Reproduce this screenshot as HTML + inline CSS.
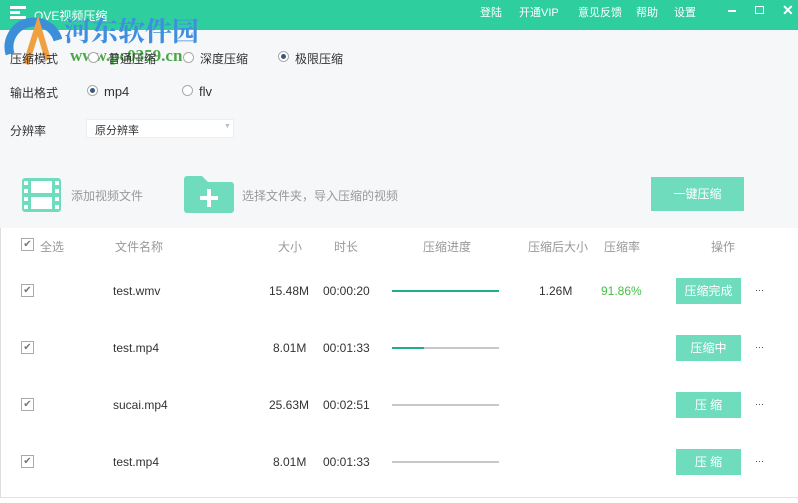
<!DOCTYPE html>
<html><head><meta charset="utf-8"><style>
*{margin:0;padding:0;box-sizing:border-box}
body{width:798px;height:503px;position:relative;overflow:hidden;background:#fff;font-family:"Liberation Sans","Noto Sans CJK SC",sans-serif;font-size:12px;color:#333}
.a{position:absolute;white-space:nowrap}
.tb{left:0;top:0;width:798px;height:30px;background:#2fce9e}
.top{left:0;top:30px;width:798px;height:198px;background:#f6f7f9}
.w{color:#fff;font-size:11px}
.radio{width:11px;height:11px;border:1px solid #aaa;border-radius:50%;background:#fff}
.radio.on::after{content:"";position:absolute;left:2px;top:2px;width:5px;height:5px;border-radius:50%;background:#3a5a7a}
.cb{width:13px;height:13px;border:1px solid #aaa;background:#fff;font-size:10px;line-height:11px;text-align:center;color:#777}
.btn{width:65px;height:26px;background:#6fdcbd;color:#fff;text-align:center;line-height:26px;font-size:12px}
.bar{height:2px;background:#c8c8c8;width:107px;left:392px}
.g{color:#999}
</style></head><body>
<div class="a tb"></div>
<svg class="a" style="left:10px;top:6px" width="16" height="14"><rect x="0" y="0" width="16" height="3" fill="#fff"/><rect x="0" y="5" width="10" height="3" fill="#fff"/><rect x="0" y="10" width="16" height="3" fill="#fff"/></svg>
<div class="a w" style="left:34px;top:7px;font-size:12px">QVE视频压缩</div>
<div class="a w" style="left:480px;top:4px">登陆</div>
<div class="a w" style="left:519px;top:4px">开通VIP</div>
<div class="a w" style="left:578px;top:4px">意见反馈</div>
<div class="a w" style="left:636px;top:4px">帮助</div>
<div class="a w" style="left:674px;top:4px">设置</div>
<div class="a" style="left:728px;top:10px;width:8px;height:2px;background:#fff"></div>
<div class="a" style="left:755px;top:6px;width:9px;height:8px;border:1px solid #fff"></div>
<div class="a w" style="left:782px;top:2px;font-size:14px;font-weight:bold">✕</div>
<div class="a top"></div>
<svg class="a" style="left:2px;top:10px" width="60" height="56"><path d="M8 44 A24 24 0 1 1 56 30" stroke="#3d8ed8" stroke-width="9" fill="none"/><path d="M24 54 L36 16 L46 50" stroke="#f0a040" stroke-width="6" fill="none"/></svg>
<div class="a" style="left:64px;top:10px;font-size:27px;font-weight:bold;color:#3f8fe0;font-family:'Noto Serif CJK SC',serif">河东软件园</div>
<div class="a" style="left:70px;top:46px;font-size:17px;font-weight:bold;color:#4aa84a;font-family:'Liberation Serif',serif">www.pc0359.cn</div>
<div class="a" style="left:10px;top:50px;color:#333">压缩模式</div>
<div class="a radio" style="left:88px;top:52px"></div>
<div class="a" style="left:108px;top:50px">普通压缩</div>
<div class="a radio" style="left:183px;top:52px"></div>
<div class="a" style="left:200px;top:50px">深度压缩</div>
<div class="a radio on" style="left:278px;top:51px"></div>
<div class="a" style="left:295px;top:50px">极限压缩</div>
<div class="a" style="left:10px;top:84px">输出格式</div>
<div class="a radio on" style="left:87px;top:85px"></div>
<div class="a" style="left:104px;top:84px;font-size:13px">mp4</div>
<div class="a radio" style="left:182px;top:85px"></div>
<div class="a" style="left:199px;top:84px;font-size:13px">flv</div>
<div class="a" style="left:10px;top:122px">分辨率</div>
<div class="a" style="left:86px;top:119px;width:148px;height:19px;background:#fff;border:1px solid #eee"></div>
<div class="a" style="left:95px;top:122px;font-size:11px">原分辨率</div>
<div class="a" style="left:224px;top:123px;font-size:7px;color:#bbb">▼</div>
<svg class="a" style="left:22px;top:178px" width="39" height="34"><rect x="0" y="0" width="39" height="34" rx="3" fill="#6fdcbd"/><rect x="9" y="3" width="21" height="12" fill="#fff"/><rect x="9" y="19" width="21" height="12" fill="#fff"/><g fill="#fff"><rect x="2" y="3" width="4" height="4"/><rect x="2" y="11" width="4" height="4"/><rect x="2" y="19" width="4" height="4"/><rect x="2" y="27" width="4" height="4"/><rect x="33" y="3" width="4" height="4"/><rect x="33" y="11" width="4" height="4"/><rect x="33" y="19" width="4" height="4"/><rect x="33" y="27" width="4" height="4"/></g></svg>
<div class="a g" style="left:71px;top:187px">添加视频文件</div>
<svg class="a" style="left:184px;top:176px" width="50" height="37"><path d="M3 0 H18 L24 6 H47 A3 3 0 0 1 50 9 V34 A3 3 0 0 1 47 37 H3 A3 3 0 0 1 0 34 V3 A3 3 0 0 1 3 0Z" fill="#6fdcbd"/><rect x="23" y="13" width="4" height="18" fill="#fff"/><rect x="16" y="20" width="18" height="4" fill="#fff"/></svg>
<div class="a g" style="left:242px;top:187px">选择文件夹，导入压缩的视频</div>
<div class="a btn" style="left:651px;top:177px;width:93px;height:34px;line-height:34px">一键压缩</div>
<div class="a" style="left:0;top:228px;width:1px;height:270px;background:#ddd"></div>
<div class="a" style="left:0;top:497px;width:798px;height:1px;background:#e3e3e3"></div>
<div class="a cb" style="left:21px;top:238px">✔</div>
<div class="a g" style="left:40px;top:238px">全选</div>
<div class="a g" style="left:115px;top:238px">文件名称</div>
<div class="a g" style="left:278px;top:238px">大小</div>
<div class="a g" style="left:334px;top:238px">时长</div>
<div class="a g" style="left:423px;top:238px">压缩进度</div>
<div class="a g" style="left:528px;top:238px">压缩后大小</div>
<div class="a g" style="left:604px;top:238px">压缩率</div>
<div class="a g" style="left:711px;top:238px">操作</div>

<div class="a cb" style="left:21px;top:284px">✔</div>
<div class="a" style="left:113px;top:284px">test.wmv</div>
<div class="a" style="left:269px;top:284px">15.48M</div>
<div class="a" style="left:323px;top:284px">00:00:20</div>
<div class="a bar" style="top:290px;background:#1fae8c"></div>
<div class="a" style="left:539px;top:284px">1.26M</div>
<div class="a" style="left:601px;top:284px;color:#44c044">91.86%</div>
<div class="a btn" style="left:676px;top:278px">压缩完成</div>
<div class="a" style="left:755px;top:285px;font-size:9px">···</div>

<div class="a cb" style="left:21px;top:341px">✔</div>
<div class="a" style="left:113px;top:341px">test.mp4</div>
<div class="a" style="left:273px;top:341px">8.01M</div>
<div class="a" style="left:323px;top:341px">00:01:33</div>
<div class="a bar" style="top:347px"></div>
<div class="a" style="left:392px;top:347px;width:32px;height:2px;background:#1fae8c"></div>
<div class="a btn" style="left:676px;top:335px">压缩中</div>
<div class="a" style="left:755px;top:342px;font-size:9px">···</div>

<div class="a cb" style="left:21px;top:398px">✔</div>
<div class="a" style="left:113px;top:398px">sucai.mp4</div>
<div class="a" style="left:269px;top:398px">25.63M</div>
<div class="a" style="left:323px;top:398px">00:02:51</div>
<div class="a bar" style="top:404px"></div>
<div class="a btn" style="left:676px;top:392px">压 缩</div>
<div class="a" style="left:755px;top:399px;font-size:9px">···</div>

<div class="a cb" style="left:21px;top:455px">✔</div>
<div class="a" style="left:113px;top:455px">test.mp4</div>
<div class="a" style="left:273px;top:455px">8.01M</div>
<div class="a" style="left:323px;top:455px">00:01:33</div>
<div class="a bar" style="top:461px"></div>
<div class="a btn" style="left:676px;top:449px">压 缩</div>
<div class="a" style="left:755px;top:456px;font-size:9px">···</div>
</body></html>
